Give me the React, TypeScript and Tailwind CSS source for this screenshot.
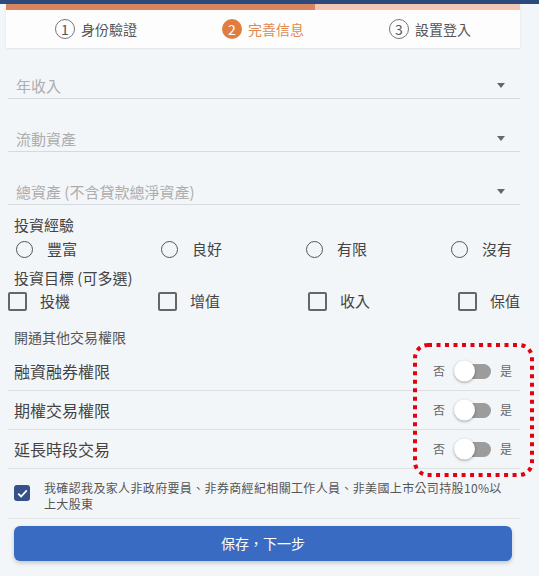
import React, { useState } from "react";

const steps = [
	{ no: "1", label: "身份驗證", active: false },
	{ no: "2", label: "完善信息", active: true },
	{ no: "3", label: "設置登入", active: false },
];

const selects = ["年收入", "流動資產", "總資產 (不含貸款總淨資產)"];
const experience = ["豐富", "良好", "有限", "沒有"];
const goals = ["投機", "增值", "收入", "保值"];
const permissions = ["融資融券權限", "期權交易權限", "延長時段交易"];

function Toggle({ on, onClick }: { on: boolean; onClick: () => void }) {
	return (
		<div className="flex items-center text-[12px] text-[#666]">
			<span>否</span>
			<button
				onClick={onClick}
				className={`relative ml-[10px] mr-[9px] h-[15px] w-[36px] rounded-full ${
					on ? "bg-[#3a6bc2]" : "bg-[#9c9c9c]"
				}`}
			>
				<span
					className={`absolute top-1/2 h-[21px] w-[21px] -translate-y-1/2 rounded-full bg-white shadow-[0_1px_3px_rgba(0,0,0,0.35)] ${
						on ? "left-[16px]" : "left-[-1px]"
					}`}
				/>
			</button>
			<span>是</span>
		</div>
	);
}

export default function App() {
	const [exp, setExp] = useState<string>("");
	const [picked, setPicked] = useState<string[]>([]);
	const [toggles, setToggles] = useState<boolean[]>([false, false, false]);
	const [confirmed, setConfirmed] = useState<boolean>(true);

	const toggleGoal = (g: string) => {
		setPicked((prev) =>
			prev.includes(g) ? prev.filter((x) => x !== g) : [...prev, g]
		);
	};

	return (
		<div className="relative min-h-[576px] w-full bg-[#f3f6f9] font-['Noto_Sans_CJK_TC','Noto_Sans',sans-serif]">
			<div className="h-[4px] bg-[#2b4a7e]" />

			{/* step header */}
			<div className="ml-[6px] w-[514px] bg-[#fdfdfd] shadow-[0_1px_2px_rgba(0,0,0,0.08)]">
				<div className="flex h-[6px]">
					<div className="w-[309px] bg-[#d8865f]" />
					<div className="flex-1 bg-[#f2c7b3]" />
				</div>
				<div className="flex h-[38px] items-center justify-center gap-[85px]">
					{steps.map((s) => (
						<div key={s.no} className="flex items-center gap-[6px]">
							<span
								className={`flex h-[20px] w-[20px] items-center justify-center rounded-full text-[14px] leading-none ${
									s.active
										? "bg-[#e27c3e] text-white"
										: "border border-[#777] text-[#555]"
								}`}
							>
								{s.no}
							</span>
							<span
								className={`text-[14px] ${
									s.active ? "text-[#e0884f]" : "text-[#555]"
								}`}
							>
								{s.label}
							</span>
						</div>
					))}
				</div>
			</div>

			<div className="ml-[8px] w-[512px]">
				{selects.map((label, i) => (
					<div
						key={label}
						className={`flex h-[26px] items-center justify-between border-b border-[#d6d9dd] pl-[8px] pr-[15px] ${
							i === 0 ? "mt-[25px]" : "mt-[27px]"
						}`}
					>
						<span className="text-[15px] leading-none text-[#adadad]">{label}</span>
						<svg width="8" height="5" viewBox="0 0 8 5">
							<path d="M0 0h8L4 5z" fill="#666" />
						</svg>
					</div>
				))}

				<p className="mt-[9px] pl-[6px] text-[15px] leading-[22px] text-[#444]">
					投資經驗
				</p>
				<div className="mt-[1px] flex h-[24px] items-center justify-between pl-[8px] pr-[8px]">
					{experience.map((e) => (
						<label
							key={e}
							onClick={() => setExp(e)}
							className="flex cursor-pointer items-center gap-[14px] text-[15px] text-[#444]"
						>
							<span className="flex h-[17px] w-[17px] items-center justify-center rounded-full border-[1.5px] border-[#555]">
								{exp === e && (
									<span className="h-[9px] w-[9px] rounded-full bg-[#3a6bc2]" />
								)}
							</span>
							{e}
						</label>
					))}
				</div>

				<p className="mt-[6px] pl-[6px] text-[15px] leading-[22px] text-[#444]">
					投資目標 (可多選)
				</p>
				<div className="flex h-[24px] items-center justify-between">
					{goals.map((g) => (
						<label
							key={g}
							onClick={() => toggleGoal(g)}
							className="flex cursor-pointer items-center gap-[13px] text-[15px] text-[#444]"
						>
							<span
								className={`h-[19px] w-[19px] rounded-[2px] border-2 ${
									picked.includes(g)
										? "border-[#3a6bc2] bg-[#3a6bc2]"
										: "border-[#666]"
								}`}
							/>
							{g}
						</label>
					))}
				</div>

				<p className="mt-[14px] pl-[6px] text-[14px] leading-[20px] text-[#555]">
					開通其他交易權限
				</p>
				<div className="mt-[5px]">
					{permissions.map((p, i) => (
						<div
							key={p}
							className="flex h-[39px] items-center justify-between border-b border-[#dcdfe3] pl-[6px] pr-[8px]"
						>
							<span className="text-[16px] text-[#444]">{p}</span>
							<Toggle
								on={toggles[i]}
								onClick={() =>
									setToggles(toggles.map((t, j) => (j === i ? !t : t)))
								}
							/>
						</div>
					))}
				</div>

				{/* confirmation */}
				<div className="flex border-b border-[#e2e4e8] pb-[6px] pl-[6px] pt-[11px]">
					<button
						onClick={() => setConfirmed(!confirmed)}
						className={`mt-[5px] flex h-[16px] w-[16px] shrink-0 items-center justify-center rounded-[3px] ${
							confirmed ? "bg-[#34518a]" : "border border-[#666] bg-white"
						}`}
					>
						{confirmed && (
							<svg width="11" height="9" viewBox="0 0 11 9">
								<path
									d="M1.2 4.6l2.9 2.9L9.8 1.4"
									fill="none"
									stroke="#fff"
									strokeWidth="1.8"
								/>
							</svg>
						)}
					</button>
					<p className="ml-[14px] text-[12px] leading-[16px] text-[#555]">
						<span className="block whitespace-nowrap tracking-[0.35px]">
							我確認我及家人非政府要員、非券商經紀相關工作人員、非美國上市公司持股10%以
						</span>
						<span className="block tracking-[0.35px]">上大股東</span>
					</p>
				</div>

				<button className="ml-[6px] mt-[7px] flex h-[35px] w-[498px] items-center justify-center rounded-[6px] bg-[#3a6bc2] text-[14px] text-white shadow-[0_2px_4px_rgba(0,0,0,0.2)]">
					保存，下一步
				</button>
			</div>

			{/* annotation box round the toggles */}
			<svg
				className="pointer-events-none absolute left-[413px] top-[343px]"
				width="121"
				height="134"
				viewBox="0 0 121 134"
			>
				<rect
					x="2"
					y="2"
					width="117"
					height="130"
					rx="13"
					fill="none"
					stroke="#e3000f"
					strokeWidth="4"
					strokeDasharray="4 4.5"
				/>
			</svg>
		</div>
	);
}
